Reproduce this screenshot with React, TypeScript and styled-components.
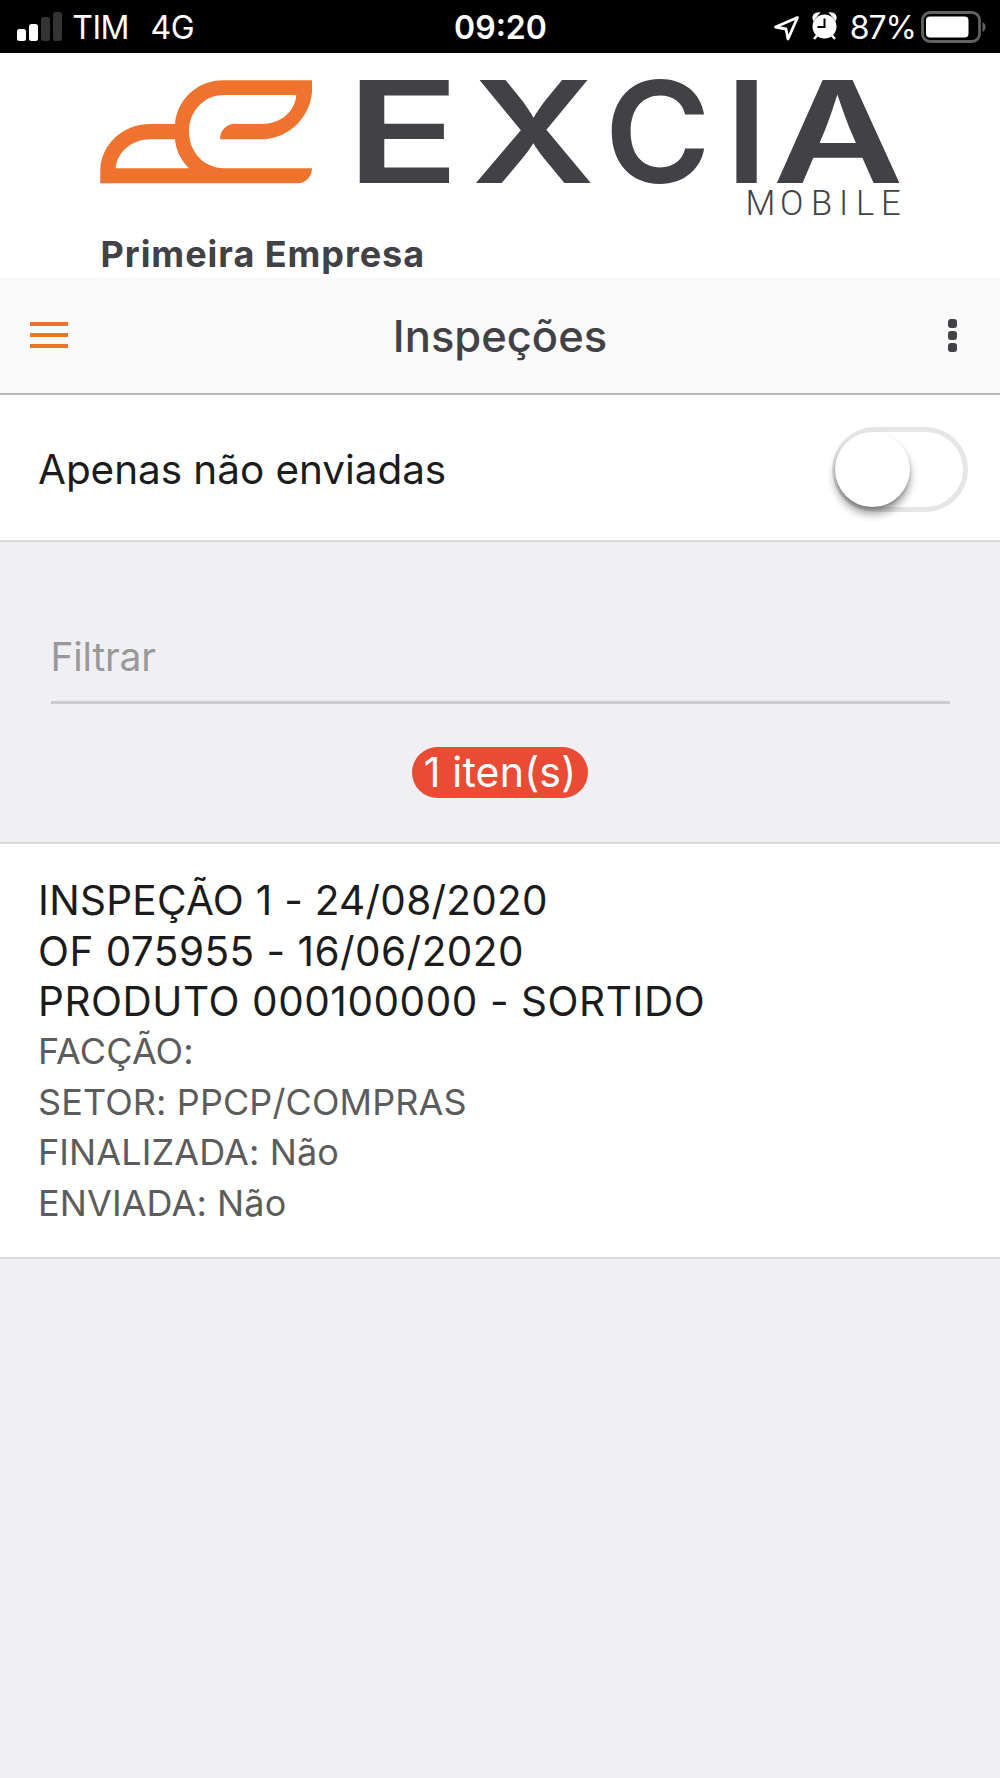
import React from 'react';
import styled, { createGlobalStyle } from 'styled-components';

const GlobalStyle = createGlobalStyle`
  * { box-sizing: border-box; }
  body { margin: 0; background: #efeff4; }
`;

const Screen = styled.div`
  display: flex;
  flex-direction: column;
  width: 1000px;
  height: 1778px;
  background: #efeff4;
  color: #1c1c1c;
  font-family: Inter, 'Liberation Sans', sans-serif;
  overflow: hidden;
`;

const StatusBar = styled.div`
  display: grid;
  grid-template-columns: 1fr auto 1fr;
  align-items: center;
  height: 53px;
  padding: 1px 14px 0 17px;
  background: #000;
  color: #fff;
  flex: none;
`;

const StatusGroup = styled.div<{ $end?: boolean }>`
  display: flex;
  align-items: center;
  justify-content: ${(p) => (p.$end ? 'flex-end' : 'flex-start')};
`;

const StatusText = styled.span<{ $left?: number; $right?: number; $spacing?: number }>`
  margin-left: ${(p) => p.$left ?? 0}px;
  margin-right: ${(p) => p.$right ?? 0}px;
  padding-top: 2px;
  font-size: 32px;
  line-height: 40px;
  letter-spacing: ${(p) => p.$spacing ?? 0}px;
  white-space: nowrap;
`;

const Clock = styled.time`
  padding: 2px 2px 0 0;
  font-size: 32px;
  line-height: 40px;
  font-weight: 600;
`;

const BrandHeader = styled.header`
  height: 224px;
  background: #fff;
  flex: none;
`;

const BrandLogo = styled.svg`
  display: block;
  overflow: visible;
`;

const Company = styled.div`
  padding-left: 100.5px;
  font-size: 36px;
  line-height: 40px;
  font-weight: 700;
  letter-spacing: 0.95px;
  color: #424146;
`;

const Toolbar = styled.nav`
  display: grid;
  grid-template-columns: 100px 1fr 100px;
  align-items: center;
  height: 118px;
  background: #fafafa;
  border-bottom: 2px solid #b7b7b7;
  flex: none;
`;

const Title = styled.h1`
  margin: 2px 0 0;
  font-size: 43.5px;
  line-height: 52px;
  font-weight: 500;
  color: #424146;
  text-align: center;
`;

const IconButton = styled.button<{ $gap: number; $end?: boolean }>`
  display: flex;
  flex-direction: column;
  align-items: ${(p) => (p.$end ? 'flex-end' : 'flex-start')};
  gap: ${(p) => p.$gap}px;
  padding: ${(p) => (p.$end ? '1px 43px 0 0' : '0 0 0 29.5px')};
  border: 0;
  background: none;
`;

const MenuLine = styled.span`
  width: 38.5px;
  height: 4px;
  background: #ef732e;
`;

const Dot = styled.span`
  width: 9px;
  height: 9px;
  border-radius: 3px;
  background: #424146;
`;

const ToggleRow = styled.label`
  display: flex;
  align-items: center;
  justify-content: space-between;
  height: 147px;
  padding: 4px 32px 0 38px;
  background: #fff;
  border-bottom: 2px solid #dadadc;
  font-size: 40.5px;
  flex: none;
`;

const ToggleLabel = styled.span`
  line-height: 50px;
  letter-spacing: -0.06px;
`;

const Switch = styled.span`
  width: 136px;
  height: 85px;
  padding: 5px 2.5px;
  border-radius: 43px;
  background: #fff;
  box-shadow: inset 0 0 0 5px #e6e6e6;
`;

const Knob = styled.span`
  display: block;
  width: 75px;
  height: 75px;
  border-radius: 50%;
  background: #fff;
  box-shadow: 0 7px 9px rgba(0, 0, 0, 0.38), 0 2px 3px rgba(0, 0, 0, 0.18);
`;

const FilterPanel = styled.section`
  display: flex;
  flex-direction: column;
  align-items: center;
  height: 302px;
  padding-top: 84px;
  border-bottom: 2px solid #dadadc;
  flex: none;
`;

const FilterInput = styled.input`
  width: 899px;
  height: 78px;
  padding: 0 0 14px;
  border: 0;
  border-bottom: 3px solid #cbcbcd;
  outline: 0;
  background: transparent;
  font: inherit;
  font-size: 39px;
  letter-spacing: -0.2px;
  &::placeholder { color: #999; opacity: 1; }
`;

const Badge = styled.span`
  width: 176px;
  height: 51px;
  margin-top: 42.5px;
  border-radius: 26px;
  background: #e94b35;
  color: #fff;
  font-size: 41px;
  line-height: 51px;
  letter-spacing: 0.2px;
  text-align: center;
`;

const Item = styled.article`
  height: 415px;
  padding: 32px 38px 0;
  background: #fff;
  border-bottom: 2px solid #dadadc;
  flex: none;
`;

const ItemLine = styled.div<{ $spacing?: number }>`
  font-size: 40.5px;
  line-height: 50.6px;
  letter-spacing: ${(p) => p.$spacing ?? 0}px;
  white-space: nowrap;
`;

const ItemDetails = styled.div`
  margin-top: -1.6px;
`;

const ItemDetail = styled(ItemLine)`
  font-size: 36px;
  letter-spacing: 0.1px;
  color: #5c5c5c;
`;

function Signal() {
  return (
    <svg width="46" height="30" viewBox="17 12 46 30">
      <rect x="17" y="29" width="9" height="12" rx="2.5" fill="#fff" />
      <rect x="29" y="24" width="9" height="17" rx="2.5" fill="#fff" />
      <rect x="41" y="17" width="9" height="24" rx="2.5" fill="#333" />
      <rect x="53" y="12" width="9" height="29" rx="2.5" fill="#333" />
    </svg>
  );
}

function StatusIcons() {
  return (
    <svg width="66" height="34" viewBox="772 9.500 66 34">
      <path d="M796.5 17 L774.5 26.5 L785 28.5 L787 38.5 Z" fill="none" stroke="#fff" strokeWidth="2.8" strokeLinejoin="round" />
      <circle cx="823.5" cy="26" r="12" fill="#fff" />
      <path d="M812.5 19 Q811 12.5 818 12.5 Z M834.5 19 Q836 12.5 829 12.5 Z" fill="#fff" stroke="#fff" strokeWidth="1.5" />
      <path d="M816 35 L813 38.5 M831 35 L834 38.5" stroke="#fff" strokeWidth="2.5" />
      <path d="M823.5 18 V26.5 H816.5" fill="none" stroke="#000" strokeWidth="2" />
    </svg>
  );
}

function Battery() {
  return (
    <svg width="66" height="34" viewBox="920 9 66 34">
      <rect x="922.5" y="11.5" width="57" height="29" rx="7.5" fill="none" stroke="#626262" strokeWidth="2.8" />
      <rect x="926" y="15.5" width="42.5" height="21" rx="4" fill="#fff" />
      <path d="M982.5 21 Q985.5 22.5 985.5 26 Q985.5 29.5 982.5 31 Z" fill="#626262" />
    </svg>
  );
}

const wordmark = [
  { letter: 'E', x: 346, stretch: 1.33 },
  { letter: 'X', x: 471.5, stretch: 1.215 },
  { letter: 'C', x: 604.5, stretch: 1.02 },
  { letter: 'I', x: 725, stretch: 1.1 },
  { letter: 'A', x: 772.5, stretch: 1.275 },
];

function Logo() {
  return (
    <BrandLogo width="1000" height="181" viewBox="0 53 1000 181">
      <path
        fill="#ef732e"
        fillRule="evenodd"
        d="M100.3 183.2 V170 C101 145 122 124 150 124 H175 C177 99 198 80.2 223 80.2 H312 V92 C310 117 290 137 265 139.2 H220 C220 131 226 124 234 124 H262 C280 124 295 112 296.3 95 H224 C204 95 189 111 189 131.5 C189 152 204 168.2 224 168.2 H312 C312 176 306 183.2 298 183.2 Z M115.7 168.2 H189 C181 160 176 151 175 139.2 H150 C132 139.2 117 152 115.7 168.2 Z"
      />
      <g fontFamily="Inter, sans-serif" fontSize="141.5" fontWeight="600" fill="#424146">
        {wordmark.map(({ letter, x, stretch }) => (
          <text key={letter} transform={`translate(${x} 183.2) scale(${stretch} 1)`}>
            {letter}
          </text>
        ))}
      </g>
      <text
        y="214.5"
        x="745.5 780 811 839 856 881"
        fontFamily="Roboto, sans-serif"
        fontSize="34.5"
        fontWeight="300"
        fill="#424146"
      >
        MOBILE
      </text>
    </BrandLogo>
  );
}

export default function App() {
  return (
    <Screen>
      <GlobalStyle />
      <StatusBar>
        <StatusGroup>
          <Signal />
          <StatusText $left={9.3} $spacing={-0.5}>TIM</StatusText>
          <StatusText $left={21.5} $spacing={-0.5}>4G</StatusText>
        </StatusGroup>
        <Clock>09:20</Clock>
        <StatusGroup $end>
          <StatusIcons />
          <StatusText $left={11} $right={4} $spacing={-1}>87%</StatusText>
          <Battery />
        </StatusGroup>
      </StatusBar>
      <BrandHeader>
        <Logo />
        <Company>Primeira Empresa</Company>
      </BrandHeader>
      <Toolbar>
        <IconButton $gap={6.6} aria-label="Menu">
          <MenuLine />
          <MenuLine />
          <MenuLine />
        </IconButton>
        <Title>Inspeções</Title>
        <IconButton $gap={3} $end aria-label="Opções">
          <Dot />
          <Dot />
          <Dot />
        </IconButton>
      </Toolbar>
      <ToggleRow>
        <ToggleLabel>Apenas não enviadas</ToggleLabel>
        <Switch role="switch" aria-checked={false}>
          <Knob />
        </Switch>
      </ToggleRow>
      <FilterPanel>
        <FilterInput placeholder="Filtrar" />
        <Badge>1 iten(s)</Badge>
      </FilterPanel>
      <Item>
        <ItemLine $spacing={0.27}>INSPEÇÃO 1 - 24/08/2020</ItemLine>
        <ItemLine $spacing={0.46}>OF 075955 - 16/06/2020</ItemLine>
        <ItemLine $spacing={0.56}>PRODUTO 000100000 - SORTIDO</ItemLine>
        <ItemDetails>
          <ItemDetail>FACÇÃO:</ItemDetail>
          <ItemDetail>SETOR: PPCP/COMPRAS</ItemDetail>
          <ItemDetail>FINALIZADA: Não</ItemDetail>
          <ItemDetail>ENVIADA: Não</ItemDetail>
        </ItemDetails>
      </Item>
    </Screen>
  );
}
